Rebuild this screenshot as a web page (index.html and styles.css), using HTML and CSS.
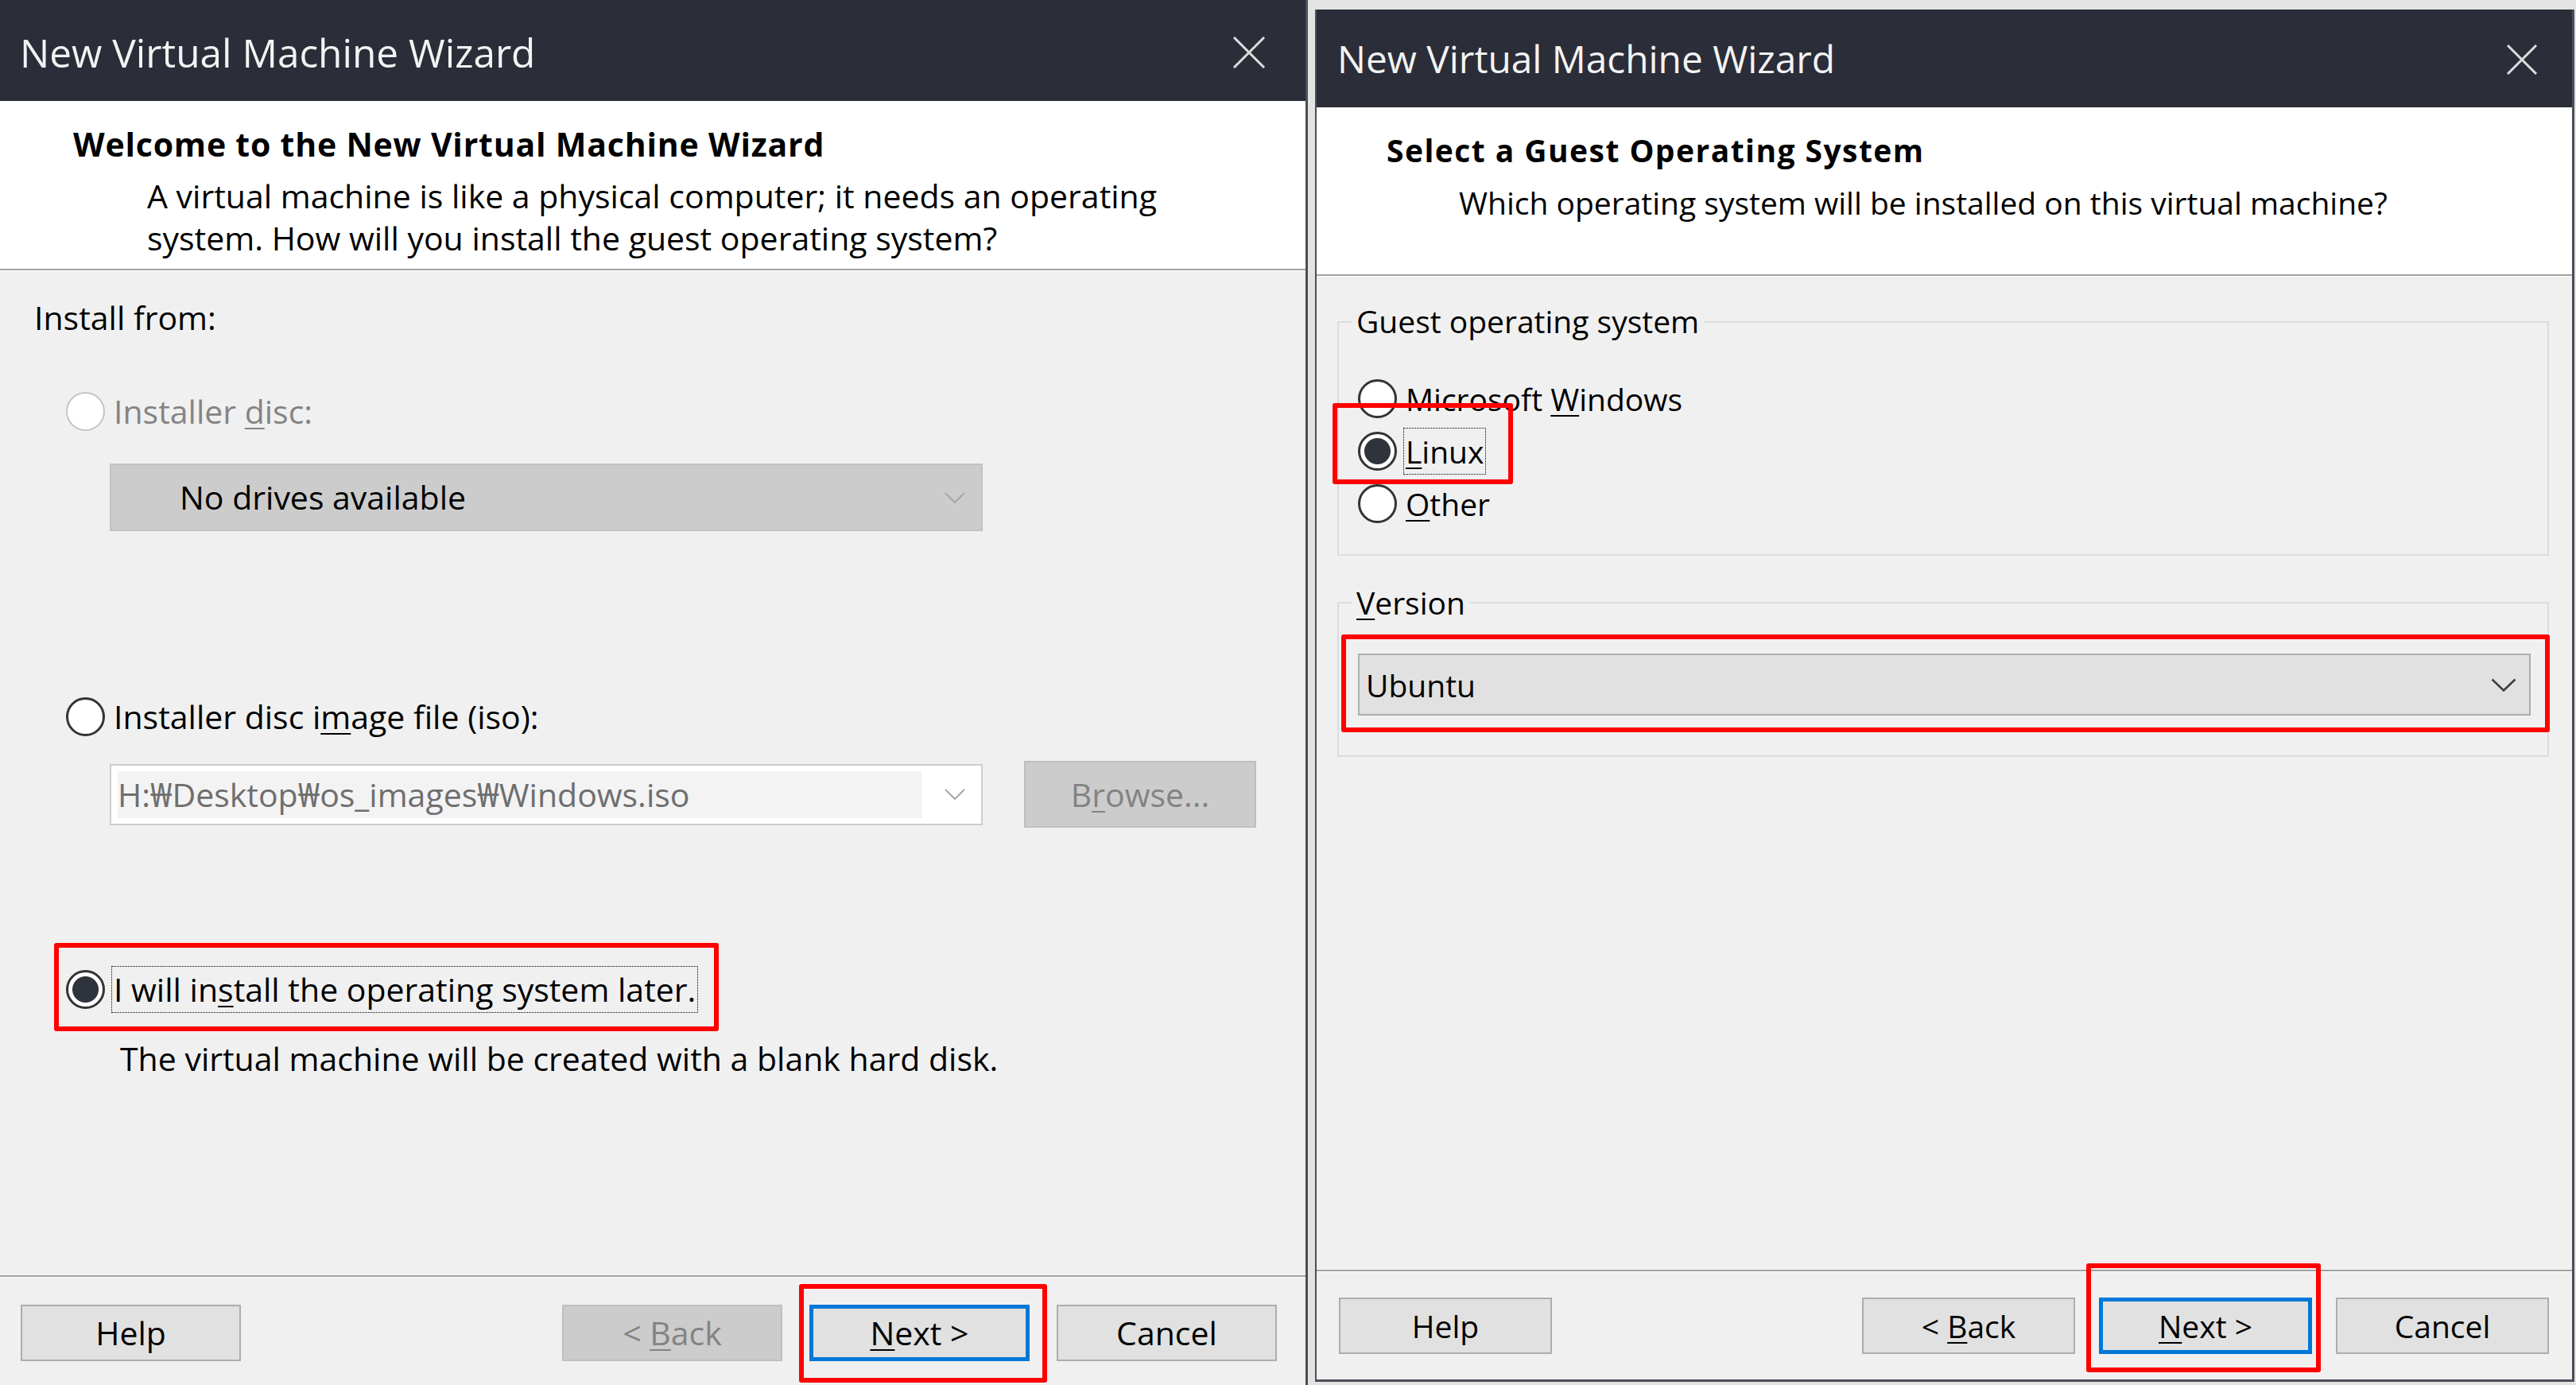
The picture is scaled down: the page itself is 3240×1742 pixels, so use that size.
FILE: index.html
```html
<!DOCTYPE html>
<html lang="en">
<head>
<meta charset="utf-8">
<title>New Virtual Machine Wizard</title>
<link rel="stylesheet" href="styles.css">
</head>
<body>
<div class="screen">
  <section class="win win-left">
    <header class="titlebar">
      <span class="title">New Virtual Machine Wizard</span>
      <svg class="close" width="42" height="40" viewBox="0 0 42 40"><path d="M2 1 L40 39 M40 1 L2 39" stroke="#dcdcdc" stroke-width="3" fill="none"/></svg>
    </header>
    <div class="head">
      <h1>Welcome to the New Virtual Machine Wizard</h1>
      <p>A virtual machine is like a physical computer; it needs an operating<br>system. How will you install the guest operating system?</p>
    </div>
    <div class="body body-left">
      <div class="install-from">Install from:</div>
      <div class="radio-row row-disc disabled"><span class="radio"></span><span class="lbl">Installer <u>d</u>isc:</span></div>
      <div class="combo combo-drives"><span class="combo-text">No drives available</span><svg class="chev" width="26" height="14" viewBox="0 0 26 14"><path d="M1 1 L13 13 L25 1" fill="none" stroke="#a6a6a6" stroke-width="2"/></svg></div>
      <div class="radio-row row-iso"><span class="radio"></span><span class="lbl">Installer disc i<u>m</u>age file (iso):</span></div>
      <div class="iso-row">
        <div class="combo combo-iso"><span class="edit">H:₩Desktop₩os_images₩Windows.iso</span><svg class="chev" width="26" height="14" viewBox="0 0 26 14"><path d="M1 1 L13 13 L25 1" fill="none" stroke="#a6a6a6" stroke-width="2"/></svg></div>
        <button class="btn btn-disabled browse">B<u>r</u>owse...</button>
      </div>
      <div class="radio-row row-later"><span class="radio checked"></span><span class="lbl focus">I will in<u>s</u>tall the operating system later.</span></div>
      <p class="note">The virtual machine will be created with a blank hard disk.</p>
    </div>
    <footer class="foot foot-left">
      <button class="btn help">Help</button>
      <button class="btn btn-disabled">&lt; <u>B</u>ack</button>
      <button class="btn btn-default"><u>N</u>ext &gt;</button>
      <button class="btn">Cancel</button>
    </footer>
  </section>

  <section class="win win-right">
    <header class="titlebar">
      <span class="title">New Virtual Machine Wizard</span>
      <svg class="close" width="40" height="38" viewBox="0 0 40 38"><path d="M2 1 L38 37 M38 1 L2 37" stroke="#dcdcdc" stroke-width="3" fill="none"/></svg>
    </header>
    <div class="head">
      <h1>Select a Guest Operating System</h1>
      <p>Which operating system will be installed on this virtual machine?</p>
    </div>
    <div class="body body-right">
      <div class="group group-os">
        <div class="legend">Guest operating system</div>
        <div class="radio-row first"><span class="radio"></span><span class="lbl">Microsoft <u>W</u>indows</span></div>
        <div class="radio-row"><span class="radio checked"></span><span class="lbl focus"><u>L</u>inux</span></div>
        <div class="radio-row"><span class="radio"></span><span class="lbl"><u>O</u>ther</span></div>
      </div>
      <div class="group group-ver">
        <div class="legend"><u>V</u>ersion</div>
        <div class="combo combo-ver"><span class="combo-text">Ubuntu</span><svg class="chev" width="32" height="17" viewBox="0 0 32 17"><path d="M1.5 1.5 L16 15.5 L30.5 1.5" fill="none" stroke="#3c3c3c" stroke-width="2.5"/></svg></div>
      </div>
    </div>
    <footer class="foot foot-right">
      <button class="btn help">Help</button>
      <button class="btn">&lt; <u>B</u>ack</button>
      <button class="btn btn-default"><u>N</u>ext &gt;</button>
      <button class="btn">Cancel</button>
    </footer>
  </section>

  <div class="mark mark-later"></div>
  <div class="mark mark-next-left"></div>
  <div class="mark mark-linux"></div>
  <div class="mark mark-version"></div>
  <div class="mark mark-next-right"></div>
</div>
</body>
</html>
```

FILE: styles.css
```css
* { box-sizing: border-box; }
html, body { margin: 0; padding: 0; }
body {
  width: 3240px;
  height: 1742px;
  overflow: hidden;
  background: #e3e3e3;
  font-family: "Open Sans", "Noto Sans", "Noto Sans CJK KR", sans-serif;
  font-size: 41px;
  color: #000;
}
u { text-decoration-thickness: 2px; text-underline-offset: 5px; }

.screen {
  position: relative;
  display: flex;
  align-items: flex-start;
  gap: 9px;
  width: 3240px;
  height: 1742px;
}

.win {
  display: flex;
  flex-direction: column;
  background: #f0f0f0;
}
.win-left {
  width: 1645px;
  height: 1742px;
  border-right: 3px solid #4b4e57;
}
.win-right {
  width: 1584px;
  height: 1726px;
  margin-top: 12px;
  border-left: 2px solid #4b4e57;
  border-right: 3px solid #4b4e57;
  border-bottom: 3px solid #4b4e57;
}

/* title bar */
.titlebar {
  flex: none;
  display: flex;
  align-items: center;
  background: #2b2d38;
  color: #f3f3f3;
}
.title { line-height: 1.35; }
.close { flex: none; margin-left: auto; }
.win-left .titlebar { height: 127px; padding: 5px 50px 0 25px; }
.win-left .title { font-size: 49.5px; }
.win-right .titlebar { height: 123px; padding: 2px 43px 0 26px; }
.win-right .title { font-size: 47.8px; }

/* header */
.head {
  flex: none;
  background: #fff;
  border-bottom: 2px solid #a0a0a0;
}
.head h1 {
  margin: 0;
  font-size: 41px;
  font-weight: 700;
  line-height: 53px;
}
.head p { margin: 0; line-height: 53px; }
.win-left .head { height: 213px; padding: 28px 0 0 92px; }
.win-left .head h1 { letter-spacing: 0.8px; }
.win-left .head p { margin: 12px 0 0 93px; }
.win-right .head { height: 212px; padding: 27px 0 0 88px; }
.win-right .head h1 { font-size: 39px; letter-spacing: 1.45px; }
.win-right .head p { margin: 13px 0 0 91px; font-size: 39px; }

/* body */
.body {
  flex: 1;
  border-top: 1px solid #fff;
}
.body-right { font-size: 39px; }

.install-from { margin: 32px 0 0 43px; line-height: 53px; }

.radio-row {
  display: flex;
  align-items: center;
  height: 59px;
}
.radio {
  flex: none;
  width: 49px;
  height: 49px;
  border-radius: 50%;
  border: 3px solid #333;
  background: #fff;
}
.radio.checked {
  background: radial-gradient(circle, #2f333b 0 16px, #fff 17px);
}
.lbl {
  margin-left: 8px;
  line-height: 53px;
  padding: 2px 2px;
  border: 1px solid transparent;
  white-space: nowrap;
}
.lbl.focus { border: 1px dotted #000; }
.disabled .radio { border: 2px solid #c4c4c4; }
.disabled .lbl { color: #848484; }

.body-left .radio-row { padding-left: 83px; }
.row-disc { margin-top: 62px; }
.row-iso { margin-top: 204px; }
.row-later { margin-top: 174px; }

.combo {
  display: flex;
  align-items: center;
}
.combo-text { flex: 1; line-height: 53px; white-space: nowrap; }
.chev { flex: none; }

.combo-drives {
  margin: 36px 0 0 138px;
  width: 1098px;
  height: 85px;
  background: #cccccc;
  border: 2px solid #c2c2c2;
  padding: 0 20px 0 86px;
}

.iso-row {
  display: flex;
  align-items: center;
  height: 84px;
  margin: 26px 0 0 138px;
}
.combo-iso {
  width: 1098px;
  height: 77px;
  background: #fff;
  border: 2px solid #cdcdcd;
  padding: 0 20px 0 8px;
}
.edit {
  width: 1011px;
  height: 59px;
  margin-right: auto;
  background: #f3f3f3;
  color: #6e6e6e;
  line-height: 59px;
  white-space: nowrap;
}

.note { margin: 31px 0 0 151px; line-height: 53px; }

/* buttons */
.btn {
  flex: none;
  display: flex;
  align-items: center;
  justify-content: center;
  height: 71px;
  padding: 0;
  margin: 0;
  font: inherit;
  line-height: 1;
  color: #000;
  background: #e1e1e1;
  border: 2px solid #adadad;
  border-radius: 0;
  white-space: pre;
}
.btn-disabled {
  background: #cccccc;
  border-color: #bfbfbf;
  color: #838383;
}
.btn-default { border: 5px solid #0078d7; }

.iso-row .browse {
  margin-left: 52px;
  width: 292px;
  height: 84px;
}

/* footer */
.foot {
  flex: none;
  display: flex;
  align-items: flex-start;
  height: 138px;
  border-top: 2px solid #a0a0a0;
  box-shadow: inset 0 1px 0 #fff;
}
.foot .help { margin-right: auto; }
.foot-left { padding: 35px 36px 0 26px; font-size: 41px; }
.foot-left .btn { width: 277px; }
.foot-left .btn + .btn { margin-left: 34px; }
.foot-left .help + .btn { margin-left: 0; }
.foot-right { padding: 33px 29px 0 28px; font-size: 39px; }
.foot-right .btn { width: 268px; }
.foot-right .btn + .btn { margin-left: 30px; }
.foot-right .help + .btn { margin-left: 0; }

/* right groups */
.group {
  margin: 0 29px 0 26px;
  border: 2px solid #dcdcdc;
}
.legend {
  width: fit-content;
  padding: 0 6px;
  background: #f0f0f0;
  line-height: 53px;
  white-space: nowrap;
}
.group-os { margin-top: 56px; padding: 0 0 34px 24px; }
.group-os .legend { margin: -29px 0 0 -8px; }
.group-os .radio-row.first { margin-top: 42px; }
.group-os .radio-row + .radio-row { margin-top: 7px; }
.group-ver { margin-top: 58px; padding: 0 21px 50px 24px; }
.group-ver .legend { margin: -28px 0 0 -8px; }
.combo-ver {
  margin-top: 38px;
  height: 78px;
  background: #e1e1e1;
  border: 2px solid #adadad;
  padding: 0 16px 0 8px;
}

/* red annotation boxes overlaid on the screenshot */
.mark {
  position: absolute;
  border: 6px solid #ff0000;
  border-radius: 3px;
}
.mark-later { left: 68px; top: 1186px; width: 836px; height: 111px; }
.mark-next-left { left: 1005px; top: 1615px; width: 312px; height: 124px; }
.mark-linux { left: 1676px; top: 507px; width: 227px; height: 102px; }
.mark-version { left: 1687px; top: 798px; width: 1520px; height: 123px; }
.mark-next-right { left: 2624px; top: 1589px; width: 295px; height: 137px; }
```
